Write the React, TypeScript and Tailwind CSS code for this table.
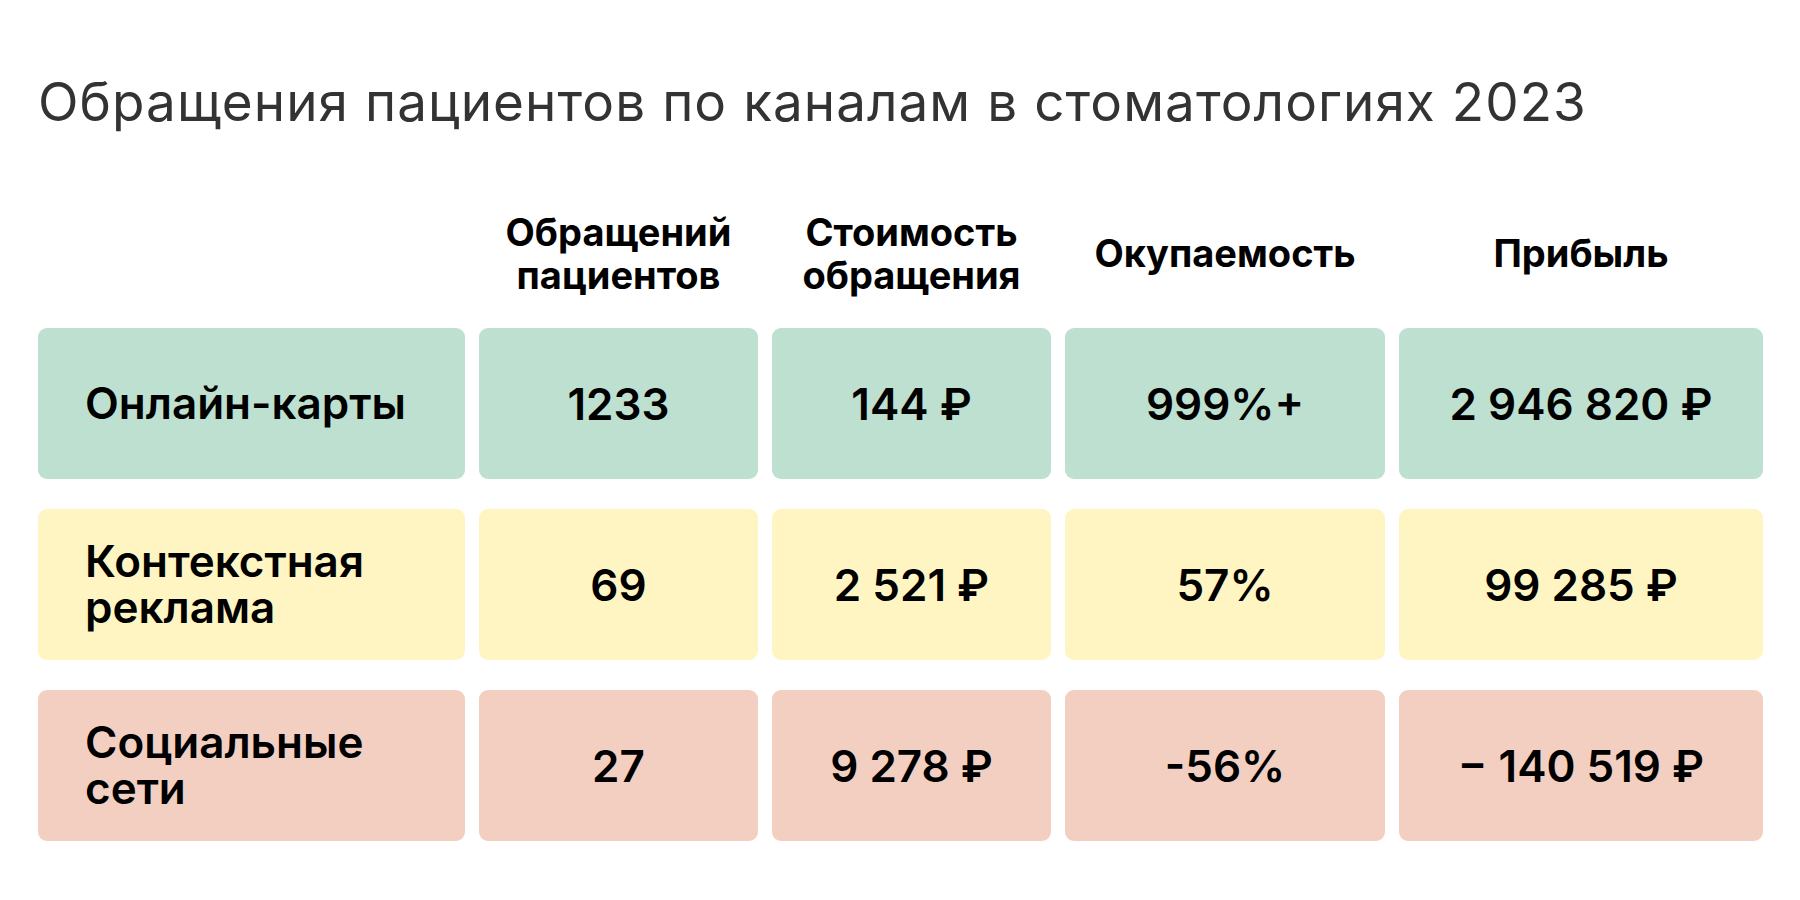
const headers = [
  ['Обращений', 'пациентов'],
  ['Стоимость', 'обращения'],
  ['Окупаемость'],
  ['Прибыль'],
];

type Row = {
  label: string[];
  values: string[];
  bg: string;
};

const rows: Row[] = [
  {
    label: ['Онлайн-карты'],
    values: ['1233', '144 ₽', '999%+', '2 946 820 ₽'],
    bg: 'bg-[#bde0d0]',
  },
  {
    label: ['Контекстная', 'реклама'],
    values: ['69', '2 521 ₽', '57%', '99 285 ₽'],
    bg: 'bg-[#fff5c2]',
  },
  {
    label: ['Социальные', 'сети'],
    values: ['27', '9 278 ₽', '-56%', '− 140 519 ₽'],
    bg: 'bg-[#f2cfc0]',
  },
];

export default function App() {
  return (
    <div className="w-[1800px] h-[900px] bg-white font-['Inter','Noto_Sans',sans-serif] text-black">
      <div className="pl-[38px] pt-[71px]">
        <h1 className="text-[53px] leading-[1.2] font-normal tracking-[0.02em] text-[#333333]">
          Обращения пациентов по каналам в стоматологиях 2023
        </h1>

        <div className="mt-[76px] grid grid-cols-[427px_279px_279px_320px_364px] gap-x-[14px]">
          <div />
          {headers.map((h, i) => (
            <div
              key={i}
              className="flex flex-col items-center justify-center text-center text-[38px] leading-[1.14] font-bold"
            >
              {h.map((line) => (
                <span key={line}>{line}</span>
              ))}
            </div>
          ))}
        </div>

        <div className="mt-[31px] flex flex-col gap-y-[30px]">
          {rows.map((row, r) => (
            <div
              key={r}
              className="grid grid-cols-[427px_279px_279px_320px_364px] gap-x-[14px] h-[151px]"
            >
              <div
                className={`${row.bg} rounded-[9px] flex flex-col justify-center pl-[47px] text-[44px] leading-[1.04] font-semibold`}
              >
                {row.label.map((line) => (
                  <span key={line}>{line}</span>
                ))}
              </div>
              {row.values.map((v, i) => (
                <div
                  key={i}
                  className={`${row.bg} rounded-[9px] flex items-center justify-center text-[44px] font-semibold whitespace-nowrap`}
                >
                  {v}
                </div>
              ))}
            </div>
          ))}
        </div>
      </div>
    </div>
  );
}
